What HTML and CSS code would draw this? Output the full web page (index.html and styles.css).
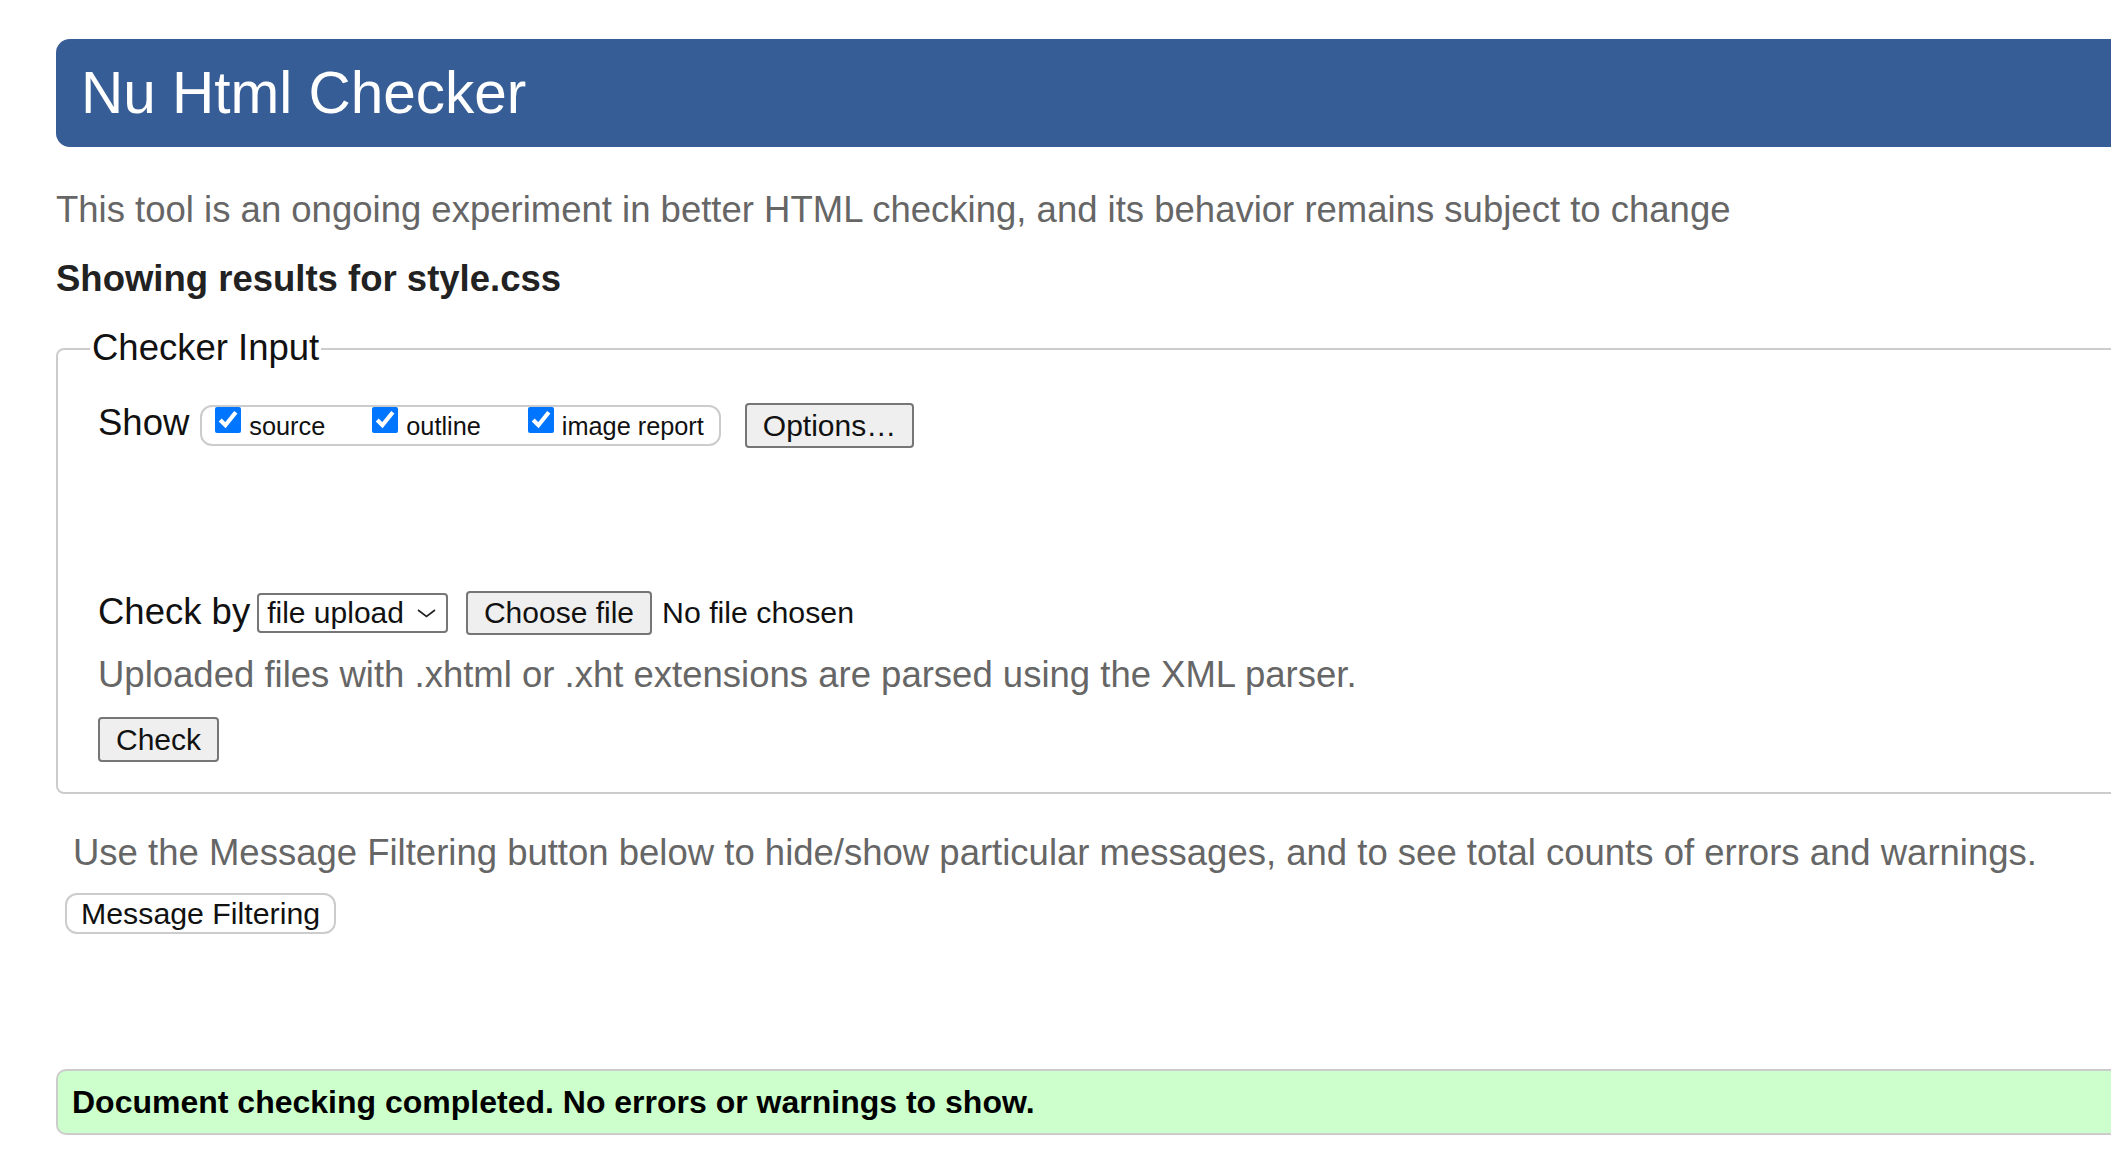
FILE: index.html
```html
<!DOCTYPE html>
<html lang="en">
<head>
<meta charset="utf-8">
<title>Nu Html Checker</title>
<link rel="stylesheet" href="styles.css">
</head>
<body>
<div class="page">
  <h1 class="masthead">Nu Html Checker</h1>
  <p class="intro">This tool is an ongoing experiment in better HTML checking, and its behavior remains subject to change</p>
  <p class="results-for">Showing results for style.css</p>

  <fieldset class="checker-input">
    <legend class="legend">Checker Input</legend>
    <div class="row show-row">
      <span class="row-label show-label">Show</span>
      <div class="toggle-group">
        <label class="toggle"><input type="checkbox" class="cb" checked><span class="toggle-text">source</span></label>
        <label class="toggle"><input type="checkbox" class="cb" checked><span class="toggle-text">outline</span></label>
        <label class="toggle"><input type="checkbox" class="cb" checked><span class="toggle-text">image report</span></label>
      </div>
      <button class="btn btn-options" type="button">Options…</button>
    </div>

    <div class="row checkby-row">
      <span class="row-label">Check by</span>
      <div class="fake-select">
        <span class="fake-select-text">file upload</span>
        <svg class="chevron" width="19" height="9" viewBox="0 0 19 9" aria-hidden="true"><path d="M1 1 L9.5 7.5 L18 1" fill="none" stroke="#222" stroke-width="1.6"/></svg>
      </div>
      <button class="btn btn-choose" type="button">Choose file</button>
      <span class="file-status">No file chosen</span>
    </div>

    <p class="upload-note">Uploaded files with .xhtml or .xht extensions are parsed using the XML parser.</p>
    <button class="btn btn-check" type="submit">Check</button>
  </fieldset>

  <div class="filter-section">
    <p class="filter-note">Use the Message Filtering button below to hide/show particular messages, and to see total counts of errors and warnings.</p>
    <button class="btn-filter" type="button">Message Filtering</button>
  </div>

  <div class="success">Document checking completed. No errors or warnings to show.</div>
</div>
</body>
</html>
```

FILE: styles.css
```css
html {
  overflow: hidden;
}

body {
  margin: 0;
  background: #ffffff;
  font-family: "Liberation Sans", Arial, sans-serif;
  color: #111;
}

.page {
  width: 2300px;
  padding-left: 56px;
  box-sizing: border-box;
}

.masthead {
  margin: 39px 0 0 0;
  background: #365d95;
  color: #ffffff;
  font-size: 58.5px;
  font-weight: normal;
  line-height: 66px;
  padding: 21px 25px;
  border-radius: 14px;
}

.intro {
  margin: 42px 0 0 0;
  font-size: 36.5px;
  line-height: 41px;
  color: #666666;
}

.results-for {
  margin: 28px 0 0 0;
  font-size: 36.5px;
  line-height: 41px;
  font-weight: bold;
  color: #222222;
}

.checker-input {
  margin: 28px 0 0 0;
  border: 2px solid #cccccc;
  border-radius: 8px;
  padding: 29px 0 30px 40px;
  min-width: 0;
}

.legend {
  font-size: 36.5px;
  line-height: 41px;
  padding: 0 2px 3px 2px;
  margin-left: -8px;
  color: #111;
}

.row {
  display: flex;
  align-items: flex-start;
}

.row-label {
  font-size: 36.5px;
  line-height: 41px;
  color: #111;
}

.show-label {
  margin-top: 2px;
}

.toggle-group {
  margin-top: 5px;
  margin-left: 11px;
  height: 41px;
  box-sizing: border-box;
  border: 2px solid #cccccc;
  border-radius: 12px;
  padding: 0 15px 0 13px;
  display: flex;
  align-items: flex-start;
  gap: 47px;
}

.toggle {
  display: flex;
  align-items: flex-start;
}

.cb {
  width: 26px;
  height: 26px;
  margin: 0 8px 0 0;
  accent-color: #0075ff;
}

.toggle-text {
  font-size: 25.3px;
  line-height: 29px;
  margin-top: 5px;
  color: #111;
}

.btn {
  font-family: "Liberation Sans", Arial, sans-serif;
  font-size: 30px;
  color: #111;
  background: #efefef;
  border: 2px solid #767676;
  border-radius: 4px;
  padding: 0 16px;
  box-sizing: border-box;
}

.btn-options {
  margin-top: 3px;
  margin-left: 24px;
  height: 45px;
  line-height: 41px;
}

.checkby-row {
  margin-top: 143px;
}

.fake-select {
  margin-top: 2px;
  margin-left: 7px;
  height: 40px;
  box-sizing: border-box;
  border: 2px solid #767676;
  border-radius: 4px;
  padding: 0 10px 0 8px;
  display: flex;
  align-items: center;
  gap: 13px;
  background: #ffffff;
}

.fake-select-text {
  font-size: 30px;
  line-height: 36px;
  color: #111;
}

.chevron {
  display: block;
}

.btn-choose {
  margin-left: 18px;
  height: 44px;
  line-height: 40px;
}

.file-status {
  margin-left: 10px;
  font-size: 30.3px;
  line-height: 44px;
  color: #111;
}

.upload-note {
  margin: 19px 0 0 0;
  font-size: 36.5px;
  line-height: 41px;
  color: #666666;
}

.btn-check {
  display: block;
  margin-top: 22px;
  height: 45px;
  line-height: 41px;
}

.filter-section {
  margin-top: 38px;
  padding-left: 9px;
}

.filter-note {
  margin: 0 0 0 8px;
  font-size: 36.5px;
  line-height: 41px;
  color: #666666;
}

.btn-filter {
  display: block;
  margin-top: 20px;
  height: 41px;
  box-sizing: border-box;
  font-family: "Liberation Sans", Arial, sans-serif;
  font-size: 30.3px;
  line-height: 37px;
  color: #111;
  background: #ffffff;
  border: 2px solid #cccccc;
  border-radius: 12px;
  padding: 0 14px;
}

.success {
  margin-top: 135px;
  background: #ccffcc;
  border: 2px solid #cccccc;
  border-radius: 10px;
  padding: 0 14px;
  font-size: 32px;
  font-weight: bold;
  line-height: 62px;
  color: #000;
}
```
